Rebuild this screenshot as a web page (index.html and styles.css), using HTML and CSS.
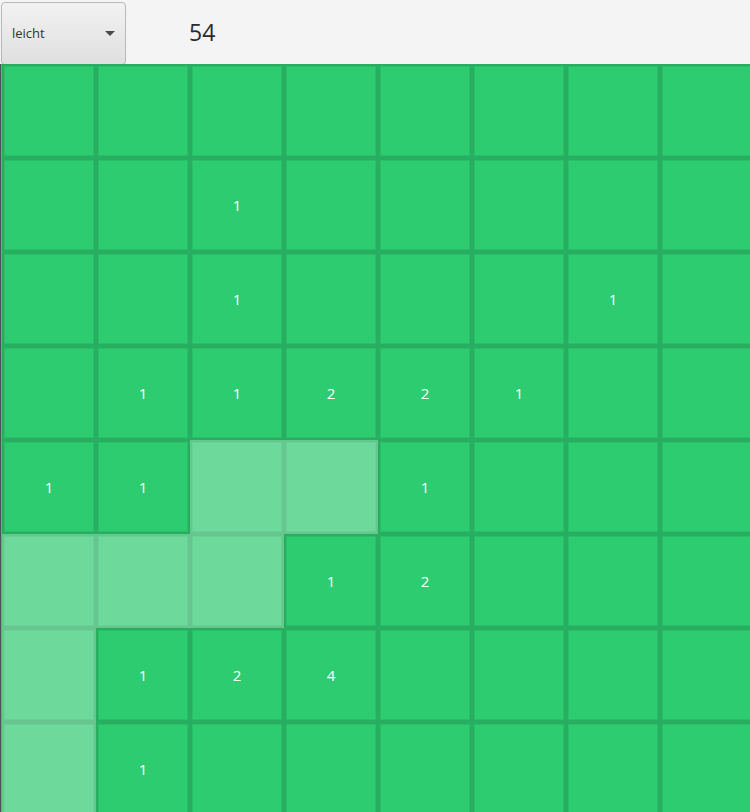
FILE: index.html
```html
<!DOCTYPE html>
<html lang="de">
<head>
<meta charset="utf-8">
<title>Minesweeper</title>
<link rel="stylesheet" href="styles.css">
</head>
<body>
<div class="app">
  <header class="toolbar">
    <div class="select">
      <span class="select-label">leicht</span>
      <span class="select-arrow"></span>
    </div>
    <div class="counter">54</div>
  </header>
  <main class="board">
    <div class="cell"></div><div class="cell"></div><div class="cell"></div><div class="cell"></div><div class="cell"></div><div class="cell"></div><div class="cell"></div><div class="cell"></div>

    <div class="cell"></div><div class="cell"></div><div class="cell">1</div><div class="cell"></div><div class="cell"></div><div class="cell"></div><div class="cell"></div><div class="cell"></div>

    <div class="cell"></div><div class="cell"></div><div class="cell">1</div><div class="cell"></div><div class="cell"></div><div class="cell"></div><div class="cell">1</div><div class="cell"></div>

    <div class="cell"></div><div class="cell">1</div><div class="cell">1</div><div class="cell">2</div><div class="cell">2</div><div class="cell">1</div><div class="cell"></div><div class="cell"></div>

    <div class="cell">1</div><div class="cell">1</div><div class="cell open"></div><div class="cell open"></div><div class="cell">1</div><div class="cell"></div><div class="cell"></div><div class="cell"></div>

    <div class="cell open"></div><div class="cell open"></div><div class="cell open"></div><div class="cell">1</div><div class="cell">2</div><div class="cell"></div><div class="cell"></div><div class="cell"></div>

    <div class="cell open"></div><div class="cell">1</div><div class="cell">2</div><div class="cell">4</div><div class="cell"></div><div class="cell"></div><div class="cell"></div><div class="cell"></div>

    <div class="cell open"></div><div class="cell">1</div><div class="cell"></div><div class="cell"></div><div class="cell"></div><div class="cell"></div><div class="cell"></div><div class="cell"></div>
  </main>
</div>
</body>
</html>
```

FILE: styles.css
```css
html, body {
  margin: 0;
  padding: 0;
  background: #f4f4f4;
  overflow: hidden;
}

.app {
  width: 750px;
  height: 812px;
  overflow: hidden;
  font-family: "Open Sans", "Noto Sans", sans-serif;
}

.toolbar {
  height: 64px;
  display: flex;
  align-items: flex-start;
  background: #f4f4f4;
}

.select {
  box-sizing: border-box;
  width: 125px;
  height: 63px;
  margin: 2px 0 0 1px;
  padding: 0 10px 0 10px;
  display: flex;
  align-items: center;
  justify-content: space-between;
  border: 1px solid #b9b9b9;
  border-radius: 4px;
  background: linear-gradient(#f2f2f2, #dfdfdf);
  box-shadow: 0 1px 1px rgba(0, 0, 0, 0.08);
}

.select-label {
  font-size: 13px;
  color: #333333;
  margin-top: -1px;
}

.select-arrow {
  width: 0;
  height: 0;
  border-left: 5px solid transparent;
  border-right: 5px solid transparent;
  border-top: 5px solid #4a4a4a;
  margin-top: -1px;
}

.counter {
  margin-left: 63px;
  height: 64px;
  display: flex;
  align-items: center;
  font-size: 23px;
  color: #2b2b2b;
  padding-bottom: 1px;
}

.board {
  display: grid;
  grid-template-columns: repeat(8, 94px);
  grid-auto-rows: 94px;
  padding-left: 1px;
  border-left: 1px solid #4b535b;
  background: #2ecc71;
}

.cell {
  box-sizing: border-box;
  border: 2px solid #27ae60;
  box-shadow: inset 0 0 0 1px rgba(39, 174, 96, 0.45);
  background: #2ecc71;
  color: #ffffff;
  font-size: 15px;
  display: flex;
  align-items: center;
  justify-content: center;
}

.cell.open {
  background: #6dd99b;
  border-color: #66c68e;
  box-shadow: inset 0 0 0 1px rgba(102, 198, 142, 0.4);
}
```
